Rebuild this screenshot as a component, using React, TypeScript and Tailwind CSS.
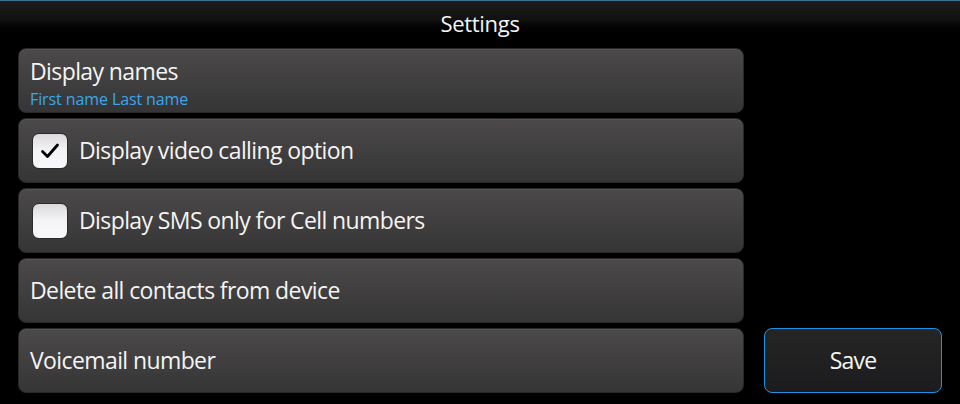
import React from "react";

function Row({ children, className = "" }: { children: React.ReactNode; className?: string }) {
  return (
    <div
      className={
        "h-[65px] rounded-[8px] bg-gradient-to-b from-[#4b494a] to-[#363536] border border-[#2a292a] flex items-center px-[11px] shadow-[inset_0_1px_0_rgba(255,255,255,0.06)] " +
        className
      }
    >
      {children}
    </div>
  );
}

function Check({ checked }: { checked: boolean }) {
  return (
    <div className="w-[36px] h-[36px] rounded-[7px] border border-[#2a2a2a] bg-gradient-to-b from-[#dcdadc] via-[#f4f3f5] to-[#f8f8fa] flex items-center justify-center shrink-0 mr-[11px] ml-[2px]">
      {checked && (
        <svg width="22" height="22" viewBox="0 0 22 22">
          <path d="M3.5 11.5 L8.5 16.5 L18.5 5" fill="none" stroke="#000" strokeWidth="2.8" strokeLinecap="round" strokeLinejoin="round" />
        </svg>
      )}
    </div>
  );
}

export default function App() {
  const font = { fontFamily: '"Open Sans", "Noto Sans", sans-serif' };
  return (
    <div className="w-[960px] h-[404px] bg-black text-[#f4f4f4] overflow-hidden" style={font}>
      <div className="h-[38px] border-t border-[#3e6f8e] bg-gradient-to-b from-[#1d1d1d] via-[#111] to-black flex justify-center pt-[11px]">
        <span className="block text-[22px] tracking-[-0.3px] leading-[22px]">Settings</span>
      </div>
      <div className="flex items-end gap-[20px] pl-[18px] pt-[10px]">
        <div className="w-[726px] flex flex-col gap-[5px]">
          <Row>
            <div className="flex flex-col mt-[6px]">
              <span className="text-[23px] leading-[27px] tracking-[-0.6px]">Display names</span>
              <span className="text-[16px] leading-[21px] mt-[4px] text-[#3aa6ec] tracking-[-0.1px]">First name Last name</span>
            </div>
          </Row>
          <Row>
            <Check checked />
            <span className="text-[23px] tracking-[-0.6px]">Display video calling option</span>
          </Row>
          <Row>
            <Check checked={false} />
            <span className="text-[23px] tracking-[-0.6px]">Display SMS only for Cell numbers</span>
          </Row>
          <Row>
            <span className="text-[23px] tracking-[-0.6px]">Delete all contacts from device</span>
          </Row>
          <Row>
            <span className="text-[23px] tracking-[-0.6px]">Voicemail number</span>
          </Row>
        </div>
        <button className="w-[178px] h-[65px] rounded-[8px] border border-[#1e93e6] bg-gradient-to-b from-[#252525] to-[#1c1c1e] flex items-center justify-center text-[23px] tracking-[-0.8px]">
          Save
        </button>
      </div>
    </div>
  );
}
